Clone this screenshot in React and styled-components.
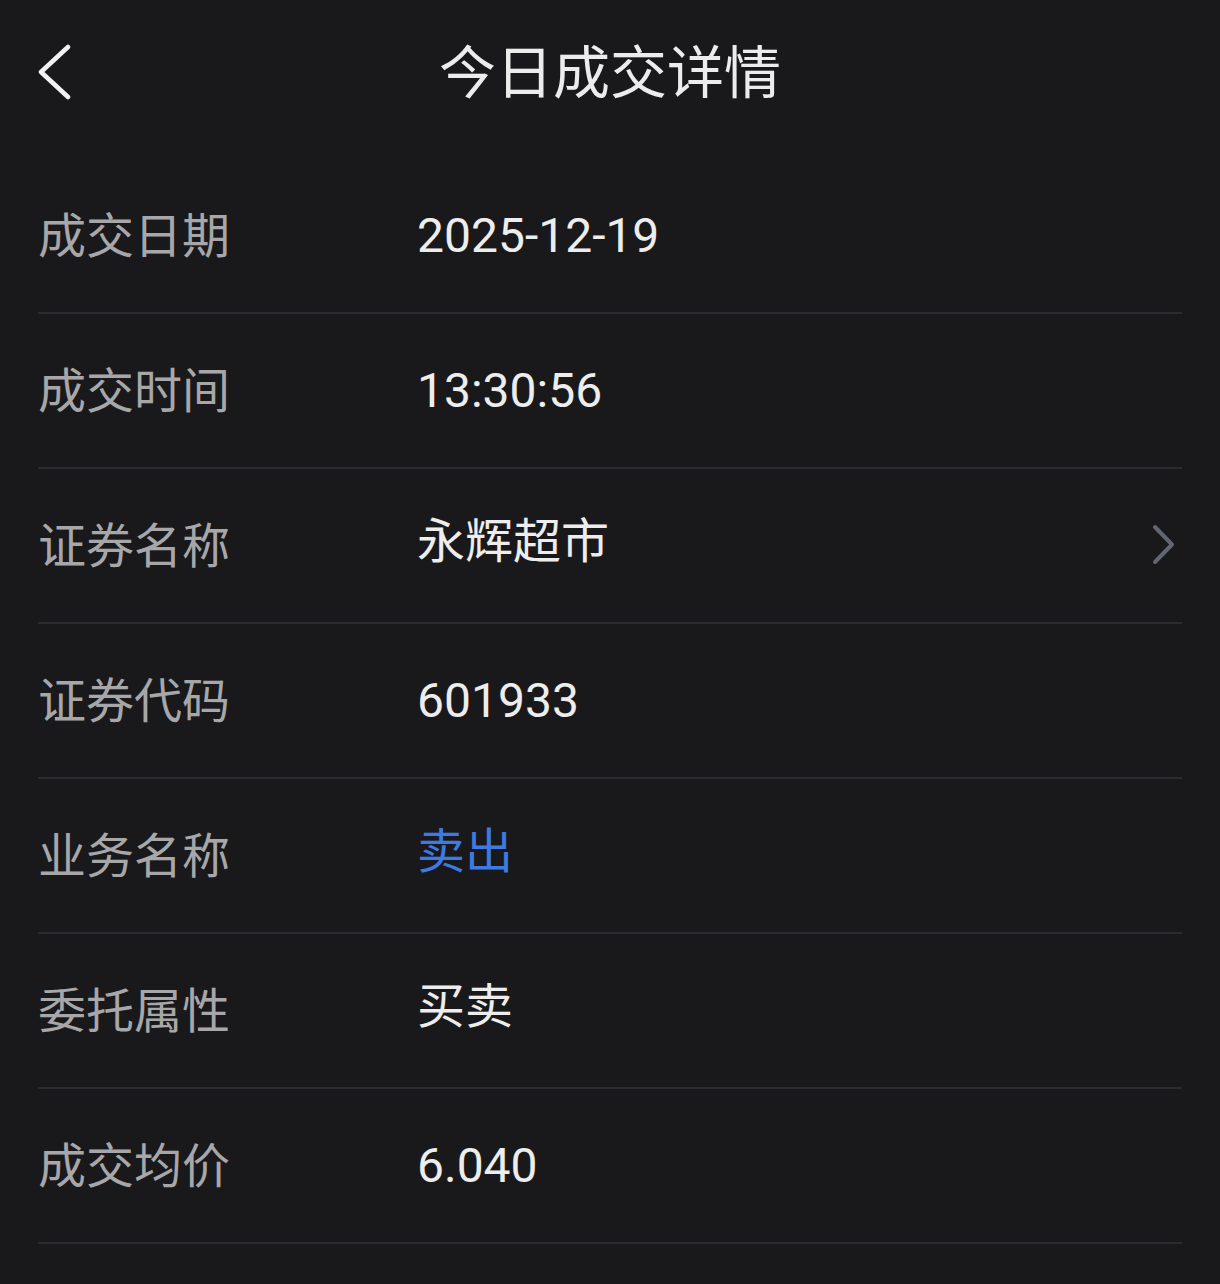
import React from 'react';
import styled, { createGlobalStyle } from 'styled-components';

const GlobalStyle = createGlobalStyle`
  html, body {
    margin: 0;
    padding: 0;
    background-color: #19191b;
  }
  body {
    font-family: Roboto, "Noto Sans CJK SC", sans-serif;
  }
`;

const Page = styled.div`
  width: 1220px;
  min-height: 1284px;
  background-color: #19191b;
  padding: 0 38px;
  box-sizing: border-box;
`;

const Header = styled.div`
  display: grid;
  grid-template-columns: 1fr auto 1fr;
  align-items: center;
  height: 146px;
  margin-bottom: 13px;
`;

const BackButton = styled.button`
  justify-self: start;
  display: flex;
  padding: 0;
  background: none;
  border: none;
  cursor: pointer;
`;

const Title = styled.h1`
  margin: 0;
  padding-bottom: 10px;
  font-family: "Noto Sans CJK SC", sans-serif;
  font-size: 57px;
  line-height: 1;
  font-weight: 400;
  color: #ececec;
`;

const List = styled.div`
  display: flex;
  flex-direction: column;
`;

const Row = styled.div`
  display: flex;
  align-items: center;
  height: 153px;
  border-bottom: 2px solid #2b2c2f;
`;

const Label = styled.span`
  width: 379px;
  flex-shrink: 0;
  padding-bottom: 8px;
  font-family: "Noto Sans CJK SC", sans-serif;
  font-size: 48px;
  line-height: 1;
  color: #a7a7a9;
`;

const Value = styled.span`
  flex: 1;
  padding-bottom: ${(p) => (p.$cjk ? '8px' : '0')};
  font-family: Roboto, "Noto Sans CJK SC", sans-serif;
  font-size: 48px;
  line-height: 1;
  color: ${(p) => (p.$blue ? '#3d7be2' : '#ededed')};
`;

const Arrow = styled.svg`
  margin-right: 6px;
  flex-shrink: 0;
`;

const rows = [
  { label: '成交日期', value: '2025-12-19' },
  { label: '成交时间', value: '13:30:56' },
  { label: '证券名称', value: '永辉超市', link: true, cjk: true },
  { label: '证券代码', value: '601933' },
  { label: '业务名称', value: '卖出', blue: true, cjk: true },
  { label: '委托属性', value: '买卖', cjk: true },
  { label: '成交均价', value: '6.040' },
];

export default function App() {
  return (
    <>
      <GlobalStyle />
      <Page>
        <Header>
          <BackButton aria-label="返回">
            <svg width="36" height="60" viewBox="0 0 36 60" fill="none">
              <path
                d="M30 4 L3 29 L30 54"
                stroke="#f2f2f2"
                strokeWidth="4.5"
                strokeLinecap="round"
                strokeLinejoin="round"
              />
            </svg>
          </BackButton>
          <Title>今日成交详情</Title>
          <div />
        </Header>
        <List>
          {rows.map((r) => (
            <Row key={r.label}>
              <Label>{r.label}</Label>
              <Value $blue={r.blue} $cjk={r.cjk}>{r.value}</Value>
              {r.link && (
                <Arrow width="24" height="44" viewBox="0 0 24 44" fill="none">
                  <path
                    d="M3 3 L20 20.5 L3 38"
                    stroke="#62666e"
                    strokeWidth="4"
                    strokeLinecap="round"
                    strokeLinejoin="round"
                  />
                </Arrow>
              )}
            </Row>
          ))}
        </List>
      </Page>
    </>
  );
}
